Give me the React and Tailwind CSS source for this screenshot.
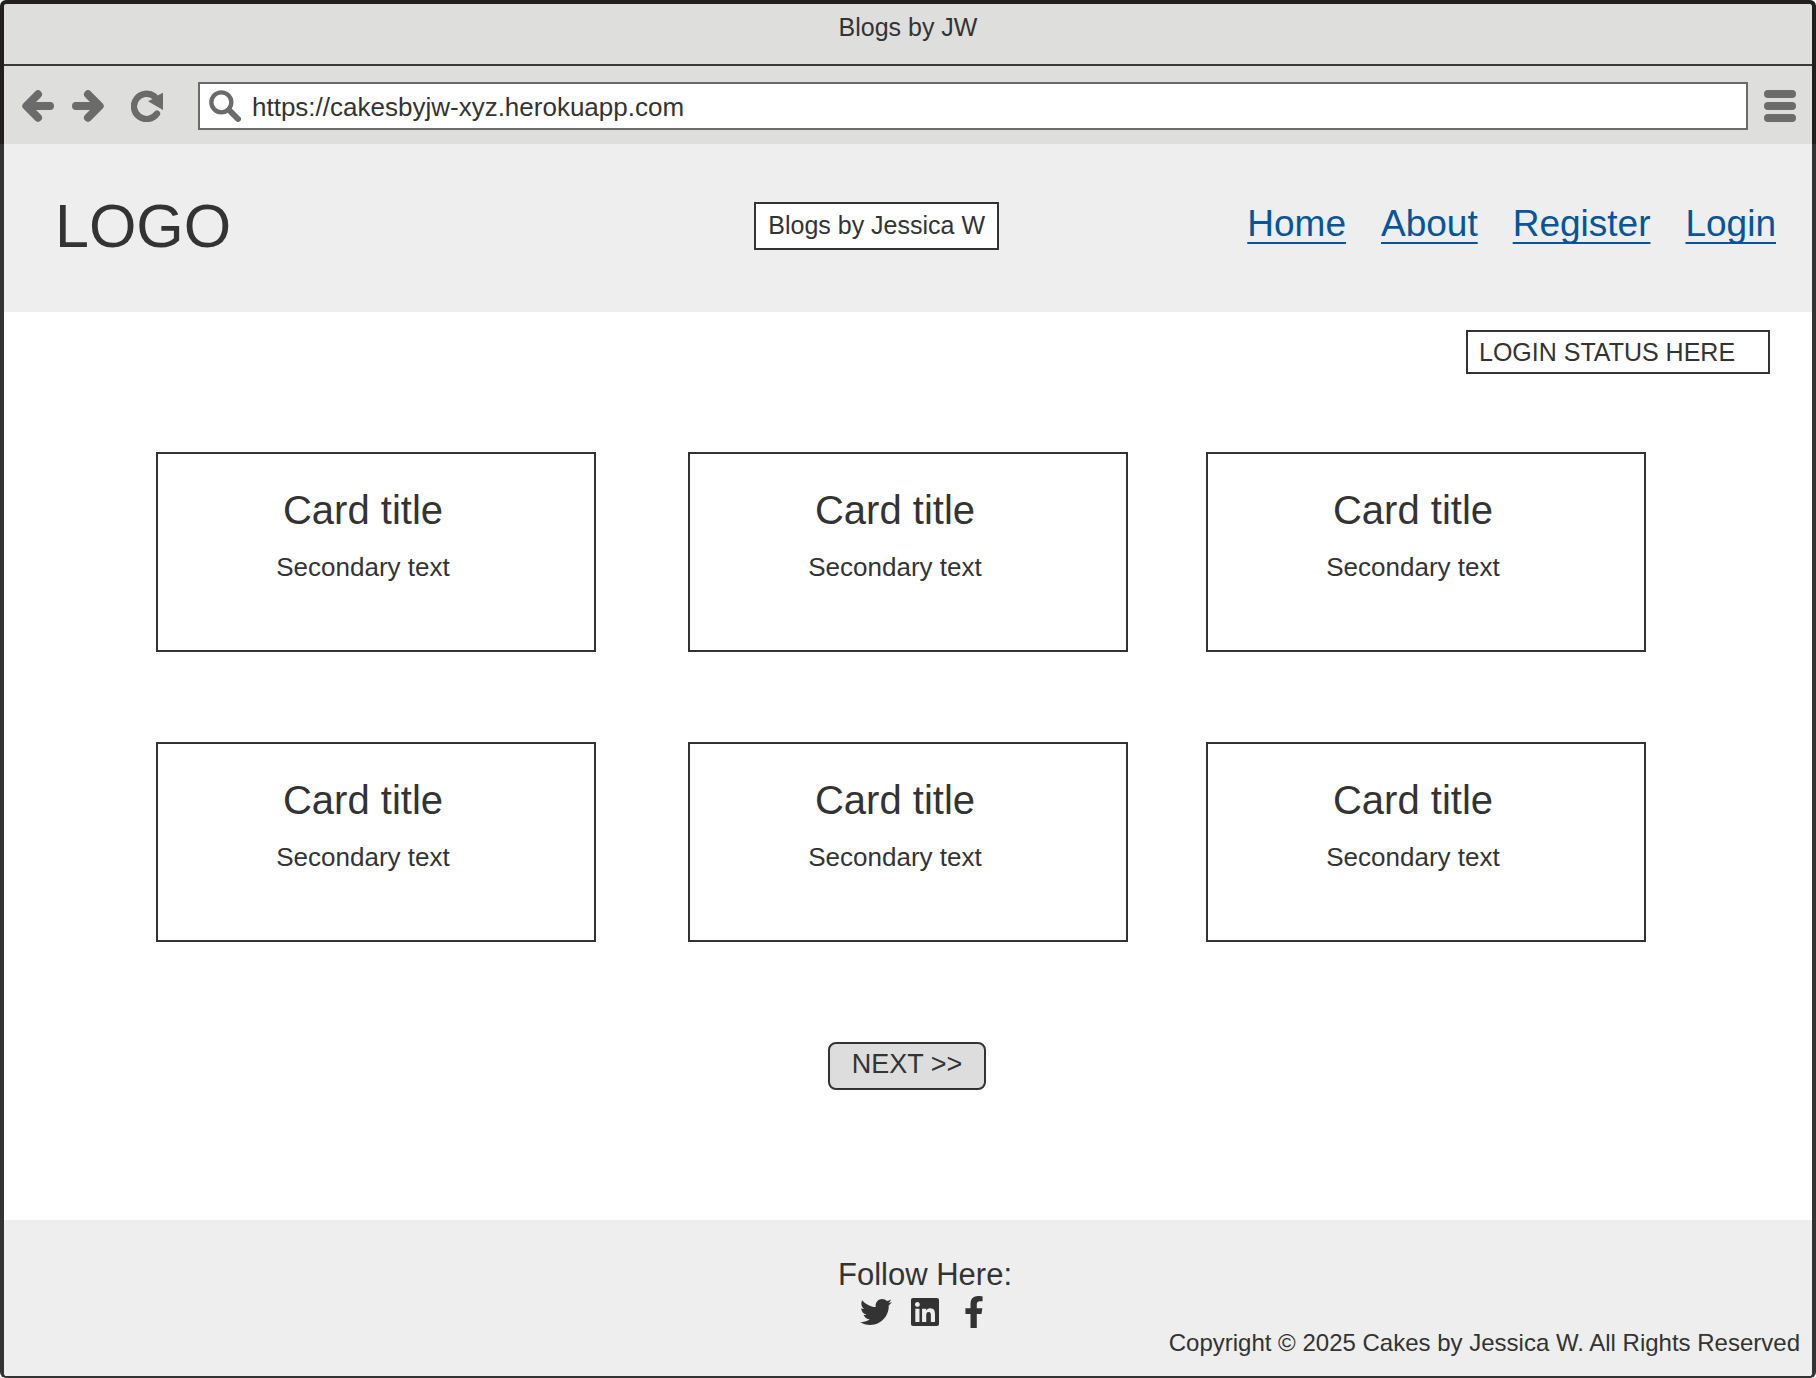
import React from "react";
import { FaTwitter, FaLinkedin, FaFacebookF } from "react-icons/fa";

const cards = [
  "col-start-1",
  "col-start-3",
  "col-start-5",
  "col-start-1",
  "col-start-3",
  "col-start-5",
];

const links = ["Home", "About", "Register", "Login"];

const socials = [
  { name: "Twitter", Icon: FaTwitter },
  { name: "LinkedIn", Icon: FaLinkedin },
  { name: "Facebook", Icon: FaFacebookF },
];

function ArrowIcon({ className = "" }) {
  return (
    <svg viewBox="0 0 96 96" className={`size-8 ${className}`} fill="none" stroke="currentColor" strokeWidth="24" strokeLinecap="round" strokeLinejoin="round" aria-hidden="true">
      <path d="M84 48H20M48 13L13 48l35 35" />
    </svg>
  );
}

function ReloadIcon() {
  return (
    <svg viewBox="0 0 96 96" className="size-8" aria-hidden="true">
      <path d="M78 71A38 38 0 1 1 70 19" fill="none" stroke="currentColor" strokeWidth="19" strokeLinecap="round" />
      <path d="M96 8v52L51 34l14-7-8-5 18-3z" fill="currentColor" />
    </svg>
  );
}

function SearchIcon() {
  return (
    <svg viewBox="0 0 96 96" className="size-8 shrink-0" fill="none" stroke="currentColor" strokeLinecap="round" aria-hidden="true">
      <circle cx="37" cy="37" r="30" strokeWidth="13" />
      <path d="M60 60l27 27" strokeWidth="18" />
    </svg>
  );
}

function MenuIcon() {
  return (
    <svg viewBox="0 0 32 32" className="size-8" fill="currentColor" aria-hidden="true">
      <rect width="32" height="8" rx="4" />
      <rect y="12" width="32" height="8" rx="4" />
      <rect y="24" width="32" height="8" rx="4" />
    </svg>
  );
}

function BrowserBar() {
  return (
    <div className="rounded-t-md border-x-4 border-t-4 border-[#231f20] bg-[#dededc]">
      <div className="border-b-2 border-[#3a3a3a] pt-[7px] pb-[21px] text-center text-[25px] leading-8">
        Blogs by JW
      </div>
      <div className="flex items-center pt-4 pr-4 pb-[14px] pl-[18px] text-[#6b6b6b]">
        <button type="button" aria-label="Back">
          <ArrowIcon />
        </button>
        <button type="button" aria-label="Forward" className="ml-[18px]">
          <ArrowIcon className="rotate-180" />
        </button>
        <button type="button" aria-label="Reload" className="ml-[27px]">
          <ReloadIcon />
        </button>
        <label className="mr-4 ml-[35px] flex h-12 min-w-0 flex-1 items-center gap-[11px] border-2 border-[#6b6b6b] bg-white pl-[9px]">
          <SearchIcon />
          <input
            type="text"
            aria-label="Address"
            defaultValue="https://cakesbyjw-xyz.herokuapp.com"
            className="min-w-0 flex-1 pt-0.5 text-[26px] leading-8 text-[#333] outline-none"
          />
        </label>
        <button type="button" aria-label="Menu">
          <MenuIcon />
        </button>
      </div>
    </div>
  );
}

function Card({ column }) {
  return (
    <article className={`${column} min-h-[200px] border-2 border-[#333] pt-8 pr-[26px] text-center`}>
      <h2 className="text-[40px] leading-[48px]">Card title</h2>
      <p className="mt-[17px] text-[26px] leading-8">Secondary text</p>
    </article>
  );
}

export default function App() {
  return (
    <div className="flex min-h-screen flex-col bg-white font-['Liberation_Sans',Arial,sans-serif] text-[#333]">
      <BrowserBar />
      <div className="flex flex-1 flex-col rounded-b-md border-x-4 border-b-2 border-[#333]">
        <header className="grid grid-cols-[9fr_auto_10fr] items-center bg-[#eee] pt-[46px] pr-9 pb-[50px] pl-[51px]">
          <div className="text-[61px] leading-[72px]">LOGO</div>
          <h1 className="flex h-12 items-center justify-center border-2 border-[#333] bg-white px-3 text-[25px] whitespace-nowrap">
            Blogs by Jessica W
          </h1>
          <nav className="flex justify-end gap-[35px] pb-1 text-[37px] leading-[48px] text-[#04559a]">
            {links.map((link) => (
              <a
                key={link}
                href={`#${link.toLowerCase()}`}
                className="underline decoration-2 underline-offset-[6px] [text-decoration-skip-ink:none]"
              >
                {link}
              </a>
            ))}
          </nav>
        </header>

        <main className="flex flex-1 flex-col">
          <div className="mt-[18px] mr-[42px] w-[304px] self-end border-2 border-[#333] pl-[11px] text-[25px] leading-10">
            LOGIN STATUS HERE
          </div>
          <section className="mt-[78px] grid grid-cols-[440fr_92fr_440fr_78fr_440fr] gap-y-[90px] pr-[166px] pl-[152px]">
            {cards.map((column, i) => (
              <Card key={i} column={column} />
            ))}
          </section>
          <button
            type="button"
            className="mt-[100px] mr-0.5 mb-[130px] h-12 w-[158px] self-center rounded-lg border-2 border-[#333] bg-[#ddd] pb-1 text-[27px] leading-8"
          >
            NEXT &gt;&gt;
          </button>
        </main>

        <footer className="rounded-b-sm bg-[#eee] pt-[35px] pb-[19px]">
          <div className="flex flex-col items-center pl-[34px]">
            <p className="text-[31px] leading-10">Follow Here:</p>
            <div className="mt-px flex gap-[17px]">
              {socials.map(({ name, Icon }) => (
                <a key={name} href={`#${name.toLowerCase()}`} aria-label={name} className="flex size-8 justify-center">
                  <Icon size={32} />
                </a>
              ))}
            </div>
          </div>
          <p className="mt-px pr-3 text-right text-[24px] leading-7">
            Copyright © 2025 Cakes by Jessica W. All Rights Reserved
          </p>
        </footer>
      </div>
    </div>
  );
}
